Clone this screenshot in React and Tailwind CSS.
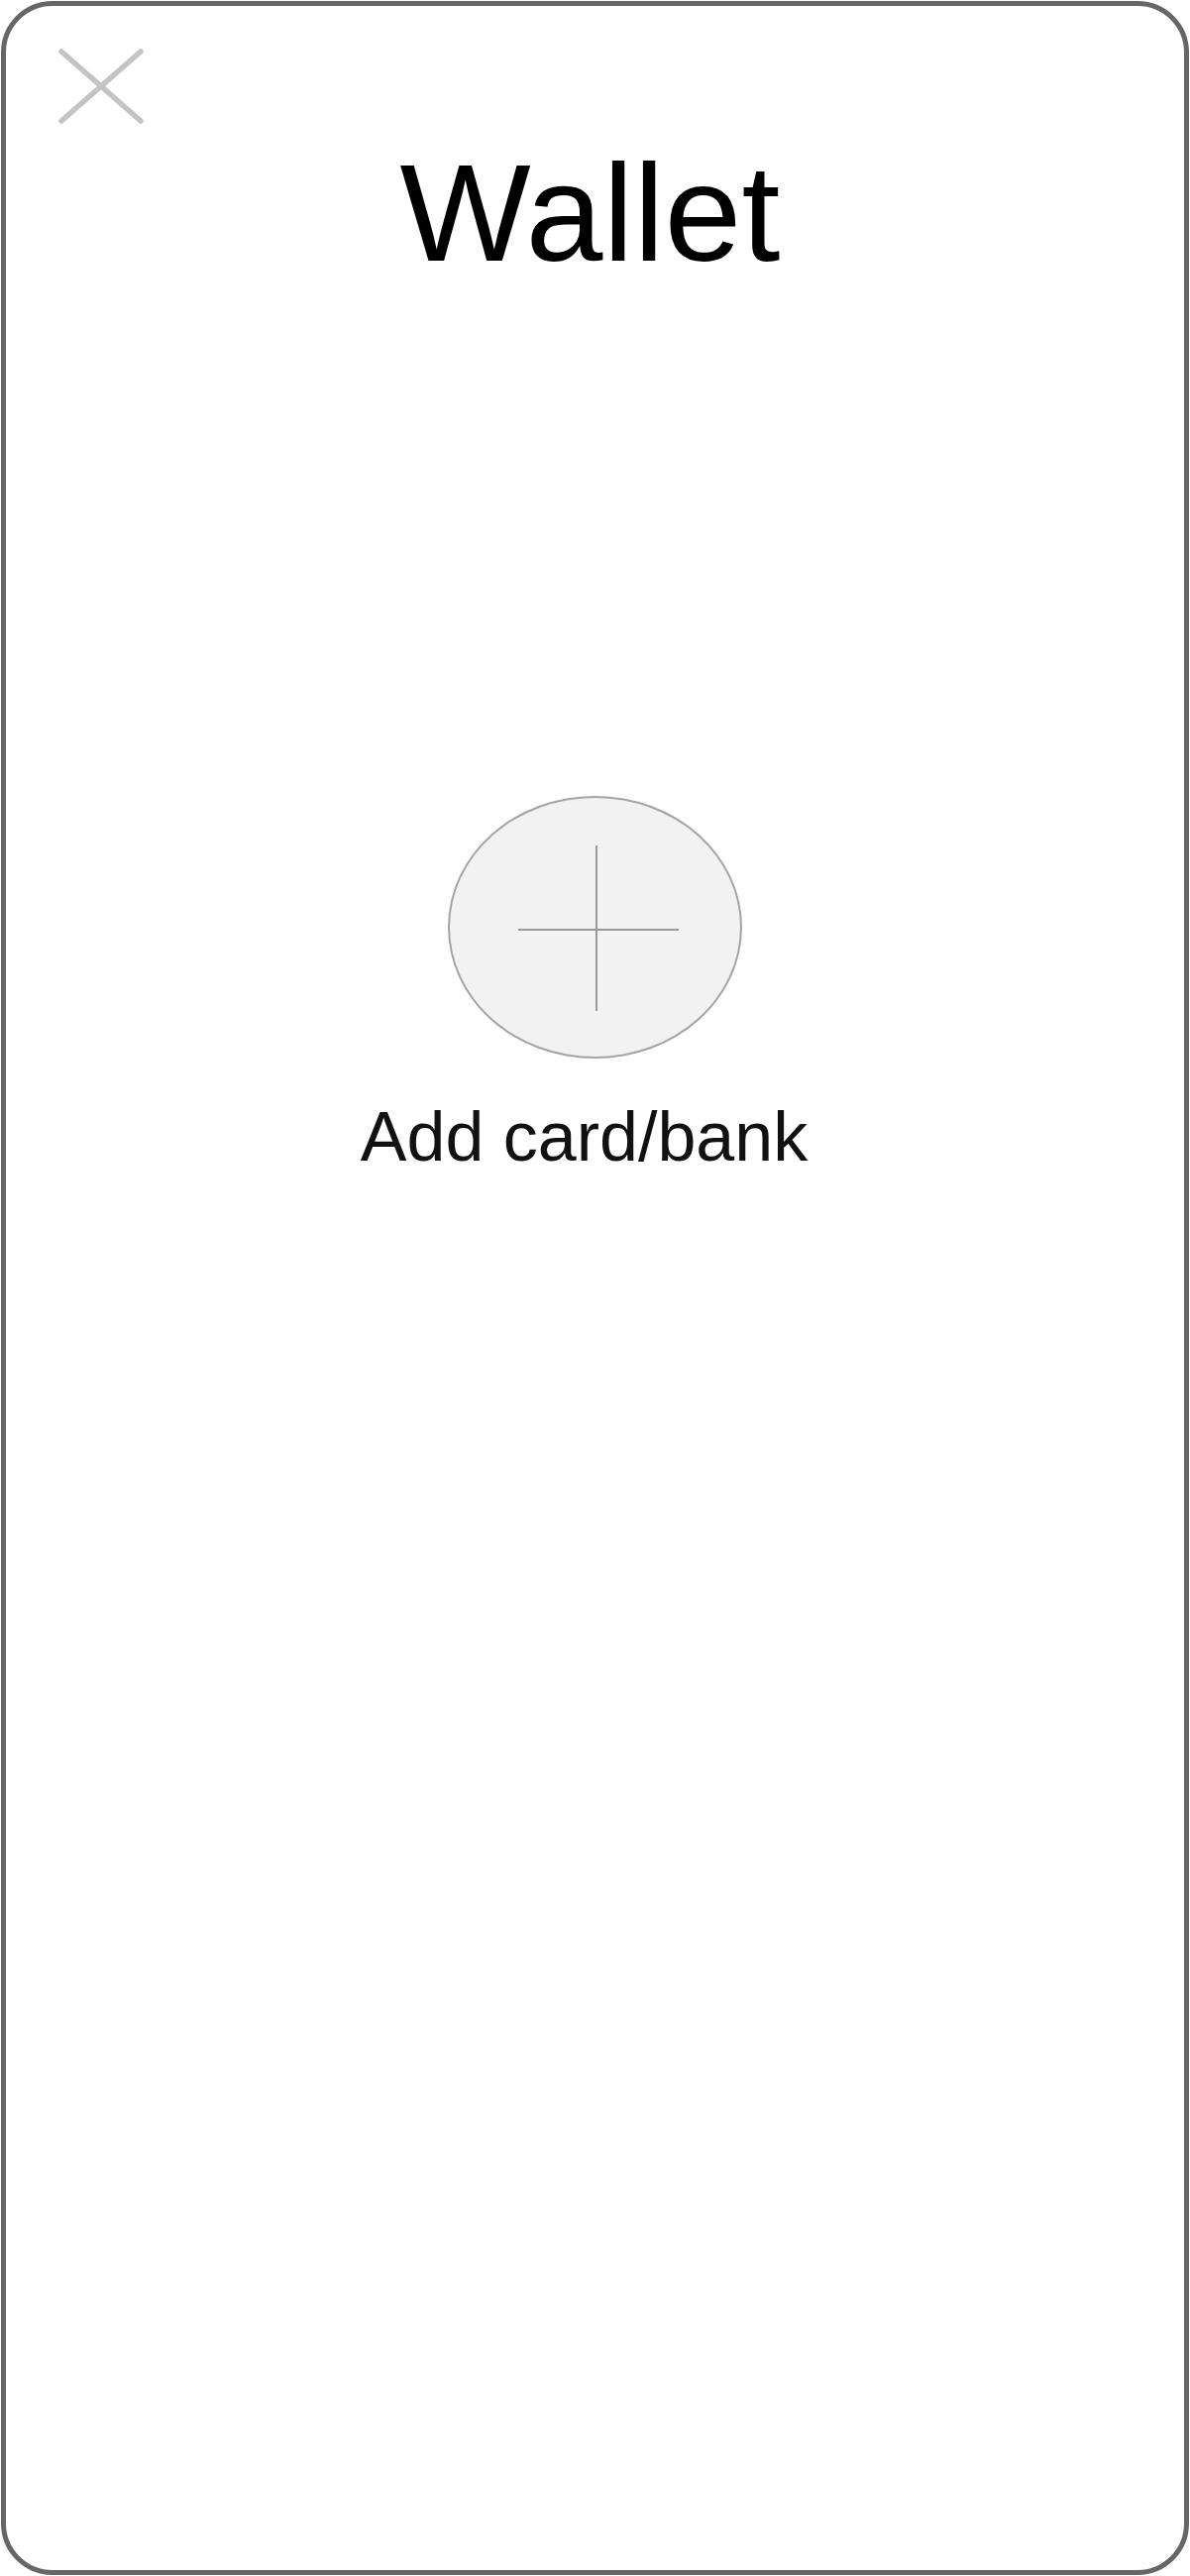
import React from 'react';

const CloseIcon = () => (
    <svg width="86" height="76" viewBox="0 0 86 76" fill="none">
        <path d="M3 3 L83 73 M83 3 L3 73" stroke="#c4c4c4" strokeWidth="5.5" strokeLinecap="round" />
    </svg>
);

// cross drawn in the circle's own box so it sits where the reference has it
const PlusIcon = () => (
    <svg width="293" height="261" viewBox="0 0 293 261" fill="none">
        <path d="M69 133 H231 M148 48 V215" stroke="#9a9a9a" strokeWidth="2" />
    </svg>
);

const App = () => {
    return (
        <div className="w-[1201px] h-[2599px] bg-white pt-px pl-px font-['Liberation_Sans',Arial,sans-serif]">
            <div className="w-[1199px] h-[2597px] border-[5px] border-[#666666] rounded-[52px] flex flex-col">
                <button className="ml-[53px] mt-[43px] self-start">
                    <CloseIcon />
                </button>

                <h1 className="mt-[20px] text-[140px] leading-[140px] text-black text-center pr-[10px]">
                    Wallet
                </h1>

                <div className="mt-[518px] flex flex-col items-center">
                    <button className="w-[297px] h-[265px] rounded-[50%] bg-[#f2f2f2] border-2 border-[#a4a4a4]">
                        <PlusIcon />
                    </button>
                    <p className="mt-[44px] text-[70px] leading-[70px] text-[#111111] pr-[22px]">
                        Add card/bank
                    </p>
                </div>
            </div>
        </div>
    );
};

export default App;
